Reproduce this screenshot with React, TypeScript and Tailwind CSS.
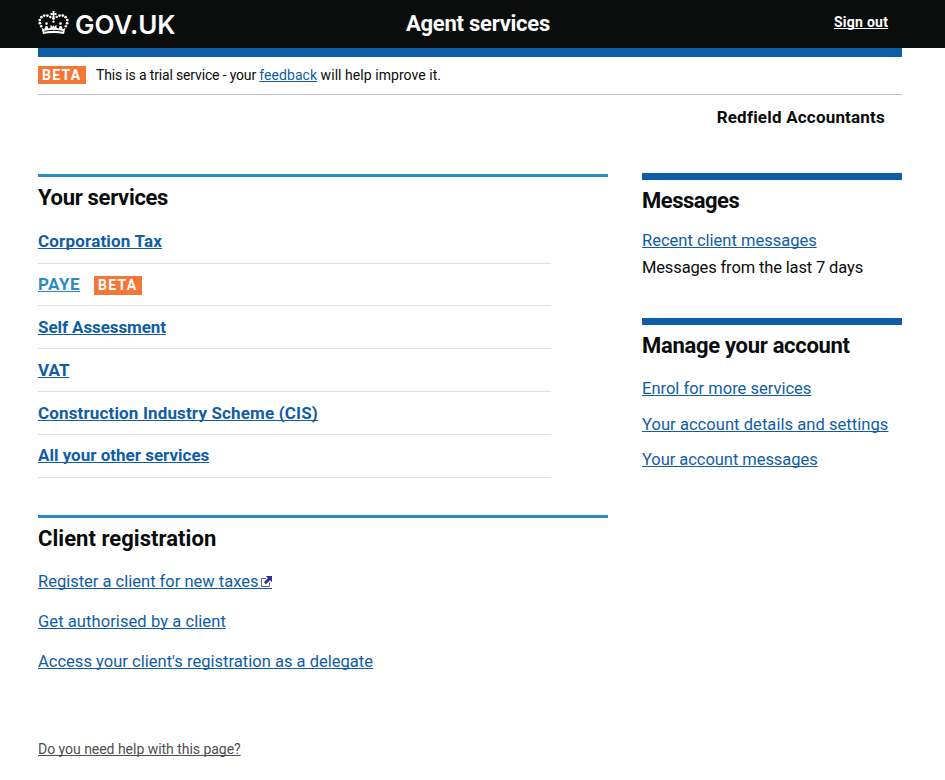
import type { ReactNode } from "react";

function Crown() {
  return (
    <svg width="31" height="24" viewBox="0 0 31 24" fill="#fff" aria-hidden="true">
      <path d="M14.400 0h2.200l-.4 2.200 2.300-.4v2.400l-2.300-.4.5 2.400h-2.400l.5-2.400-2.300.4V1.800l2.300.4z" />
      <circle cx="15.500" cy="7.500" r="1.450" />
      <circle cx="12.300" cy="6" r="1.250" />
      <circle cx="9.400" cy="4.600" r="1.350" />
      <circle cx="6.200" cy="4.600" r="1.350" />
      <circle cx="3.400" cy="6.200" r="1.350" />
      <circle cx="1.700" cy="9" r="1.350" />
      <circle cx="1.900" cy="12.200" r="1.350" />
      <circle cx="3.200" cy="15.200" r="1.250" />
      <circle cx="18.700" cy="6" r="1.250" />
      <circle cx="21.600" cy="4.600" r="1.350" />
      <circle cx="24.800" cy="4.600" r="1.350" />
      <circle cx="27.600" cy="6.200" r="1.350" />
      <circle cx="29.300" cy="9" r="1.350" />
      <circle cx="29.100" cy="12.200" r="1.350" />
      <circle cx="27.800" cy="15.200" r="1.250" />
      <circle cx="15.500" cy="10.600" r="1.200" />
      <circle cx="8.500" cy="12.600" r="1.300" />
      <circle cx="22.500" cy="12.600" r="1.300" />
      <path d="M5 23 3.700 16.700l2.600 1.500 1.300-3.200h1.800l.9 2.400 2.400-.9-.6-2.200 2 .4.600 1.500.8-2.400.8 2.400.6-1.500 2-.4-.6 2.200 2.400.9.900-2.400h1.800l1.300 3.200 2.600-1.500L26 23c-6.500-1.200-14.500-1.200-21 0z" />
      <path d="M6.300 20.300c5.800-1.200 12.600-1.200 18.400 0" stroke="#0b0c0c" strokeWidth="1" fill="none" />
    </svg>
  );
}

function ExternalIcon() {
  return (
    <span className="inline-block h-[16px] border-b border-[#0f5da7] pl-[3px] align-[-2px]">
      <svg className="mt-[3px]" width="11" height="11" viewBox="0 0 11 11" fill="none" aria-hidden="true">
        <path d="M5 2.500H.500v8h8V6.500" stroke="#6a5fae" />
        <path d="M5 0h6v6L9 4.200 4.900 8.300 2.900 6.300 6.900 2z" fill="#2e3191" />
      </svg>
    </span>
  );
}

function Link({ children, className = "text-[#0f5da7]" }: { children: ReactNode; className?: string }) {
  return (
    <a href="#" className={`underline decoration-1 underline-offset-[1px] [text-decoration-skip-ink:none] ${className}`}>
      {children}
    </a>
  );
}

function Beta({ className }: { className: string }) {
  return (
    <span className={`flex w-12 shrink-0 pl-1 text-sm leading-[18px] font-bold tracking-[1.3px] text-white bg-[#f47738] ${className}`}>
      BETA
    </span>
  );
}

const services = [
  { name: "Corporation Tax", row: "h-[43px] pt-[10px] tracking-[0.18px]" },
  { name: "PAYE", beta: true, row: "h-[42px] pt-[10px] tracking-[0.5px]" },
  { name: "Self Assessment", row: "h-[43px] pt-[11px] tracking-[-0.08px]" },
  { name: "VAT", row: "h-[43px] pt-[11px]" },
  { name: "Construction Industry Scheme (CIS)", row: "h-[43px] pt-[11px] tracking-[0.15px]" },
  { name: "All your other services", row: "h-[43px] pt-[10px]" },
];

export default function App() {
  return (
    <div className="h-[780px] overflow-hidden bg-white font-['Roboto','Liberation_Sans',sans-serif] text-[#0b0c0c]">
      <header className="flex h-12 bg-[#0b0c0c] pl-[38px] text-white">
        <div className="flex w-[368px] pt-[11px]">
          <Crown />
          <span className="ml-[6px] font-['Inter','Liberation_Sans',sans-serif] text-[26px] leading-[27px] font-semibold">GOV.UK</span>
        </div>
        <span className="w-[428px] pt-[11px] text-[22px] leading-[26px] font-bold tracking-[-0.25px]">Agent services</span>
        <span className="pt-3 text-sm font-bold tracking-[0.25px]">
          <Link className="text-white">Sign out</Link>
        </span>
      </header>

      <div className="mx-[38px] w-[864px]">
        <div className="h-[9px] bg-[#0f5da7]" />
        <div className="flex h-[38px] border-b border-[#bfc1c3] pt-[9px]">
          <Beta className="h-[18px]" />
          <p className="ml-2.5 text-sm leading-[18px] tracking-[-0.16px]">
            This is a trial service - your{" "}
            <span className="tracking-[0.05px]"><Link>feedback</Link> will help improve it.</span>
          </p>
        </div>
        <p className="mt-3 mr-[17px] text-right text-[17px] leading-5 font-bold tracking-[0.2px]">Redfield Accountants</p>

        <div className="mt-[46px] flex gap-[34px]">
          <main className="w-[570px] pt-px">
            <section className="border-t-[3px] border-[#2b8cc4] pt-2">
              <h2 className="text-[22px] leading-[26px] font-bold tracking-[-0.32px]">Your services</h2>
              <ul className="mt-2.5 w-[513px] text-[17px] leading-5 font-bold">
                {services.map((s) => (
                  <li key={s.name} className={`flex border-b border-[#dee0e2] ${s.row}`}>
                    <Link className={s.beta ? "text-[#2b8cc4]" : "text-[#0f5da7]"}>{s.name}</Link>
                    {s.beta && <Beta className="mt-0.5 ml-3.5 h-[19px]" />}
                  </li>
                ))}
              </ul>
            </section>
            <section className="mt-[37px] border-t-[3px] border-[#2b8cc4] pt-2">
              <h2 className="text-[22px] leading-[26px] font-bold tracking-[0.04px]">Client registration</h2>
              <ul className="mt-5 flex flex-col gap-5 text-[16.5px] leading-5">
                <li className="h-5">
                  <Link>Register a client for new taxes<ExternalIcon /></Link>
                </li>
                <li className="h-5 tracking-[0.08px]"><Link>Get authorised by a client</Link></li>
                <li className="h-5 tracking-[0.02px]"><Link>Access your client's registration as a delegate</Link></li>
              </ul>
            </section>
            <p className="mt-[67px] text-sm leading-5 tracking-[-0.03px]">
              <Link className="text-[#4c4f51]">Do you need help with this page?</Link>
            </p>
          </main>

          <aside className="w-[260px] text-[16.5px] leading-5">
            <section className="border-t-[7px] border-[#0f5da7] pt-2">
              <h2 className="text-[22px] leading-[26px] font-bold tracking-[-0.5px]">Messages</h2>
              <p className="mt-[17px]"><Link>Recent client messages</Link></p>
              <p className="mt-[7px] tracking-[-0.14px]">Messages from the last 7 days</p>
            </section>
            <section className="mt-10 border-t-[7px] border-[#0f5da7] pt-2">
              <h2 className="text-[22px] leading-[26px] font-bold tracking-[-0.3px]">Manage your account</h2>
              <p className="mt-5"><Link>Enrol for more services</Link></p>
              <p className="mt-4 tracking-[0.06px]"><Link>Your account details and settings</Link></p>
              <p className="mt-[15px] tracking-[-0.05px]"><Link>Your account messages</Link></p>
            </section>
          </aside>
        </div>
      </div>
    </div>
  );
}
